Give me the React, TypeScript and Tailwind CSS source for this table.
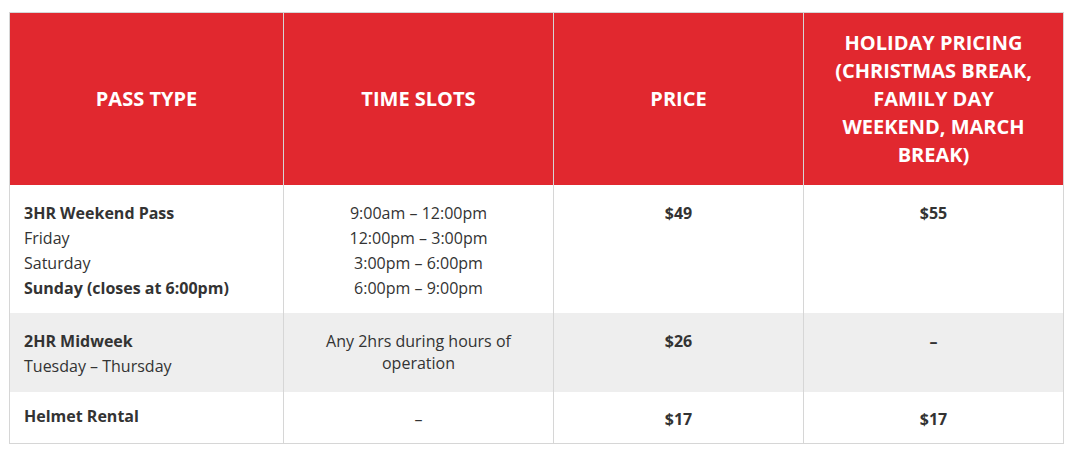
const headers = [
  'PASS TYPE',
  'TIME SLOTS',
  'PRICE',
  'HOLIDAY PRICING (CHRISTMAS BREAK, FAMILY DAY WEEKEND, MARCH BREAK)',
];

const Cell = ({ children, left, last, gray, pt }: any) => (
  <div
    className={`${gray ? 'bg-[#eeeeee]' : 'bg-white'} ${left ? 'text-left pl-[14px]' : 'text-center px-[14px]'} ${
      last ? '' : 'border-r border-[#d6d6d6]'
    } ${pt || 'pt-[16px]'} text-[16px] leading-[25px] text-[#333333]`}
  >
    {children}
  </div>
);

export default function App() {
  return (
    <div className="w-[1080px] h-[464px] bg-white pt-[12px] pl-[9px]" style={{ fontFamily: '"Open Sans", sans-serif' }}>
      <div className="w-fit grid grid-cols-[274px_270px_250px_259px] grid-rows-[172px_128px_79px_51px] border border-[#d6d6d6]">
        {headers.map((h, i) => (
          <div
            key={h}
            className={`bg-[#e1282f] text-white font-bold text-[20px] leading-[28px] text-center flex items-center justify-center px-[24px] ${
              i < 3 ? 'border-r border-[#d6d6d6]' : ''
            }`}
          >
            {h}
          </div>
        ))}

        <Cell left>
          <div className="font-bold">3HR Weekend Pass</div>
          <div>Friday</div>
          <div>Saturday</div>
          <div className="font-bold">Sunday (closes at 6:00pm)</div>
        </Cell>
        <Cell>
          <div>9:00am – 12:00pm</div>
          <div>12:00pm – 3:00pm</div>
          <div>3:00pm – 6:00pm</div>
          <div>6:00pm – 9:00pm</div>
        </Cell>
        <Cell>
          <div className="font-bold">$49</div>
        </Cell>
        <Cell last>
          <div className="font-bold">$55</div>
        </Cell>

        <Cell left gray>
          <div className="font-bold">2HR Midweek</div>
          <div>Tuesday – Thursday</div>
        </Cell>
        <Cell gray>
          <div className="leading-[22px] pt-[1px] px-[16px]">Any 2hrs during hours of operation</div>
        </Cell>
        <Cell gray>
          <div className="font-bold">$26</div>
        </Cell>
        <Cell gray last>
          <div className="font-bold">–</div>
        </Cell>

        <Cell left pt="pt-[12px]">
          <div className="font-bold">Helmet Rental</div>
        </Cell>
        <Cell pt="pt-[15px]">
          <div>–</div>
        </Cell>
        <Cell pt="pt-[15px]">
          <div className="font-bold">$17</div>
        </Cell>
        <Cell last pt="pt-[15px]">
          <div className="font-bold">$17</div>
        </Cell>
      </div>
    </div>
  );
}
